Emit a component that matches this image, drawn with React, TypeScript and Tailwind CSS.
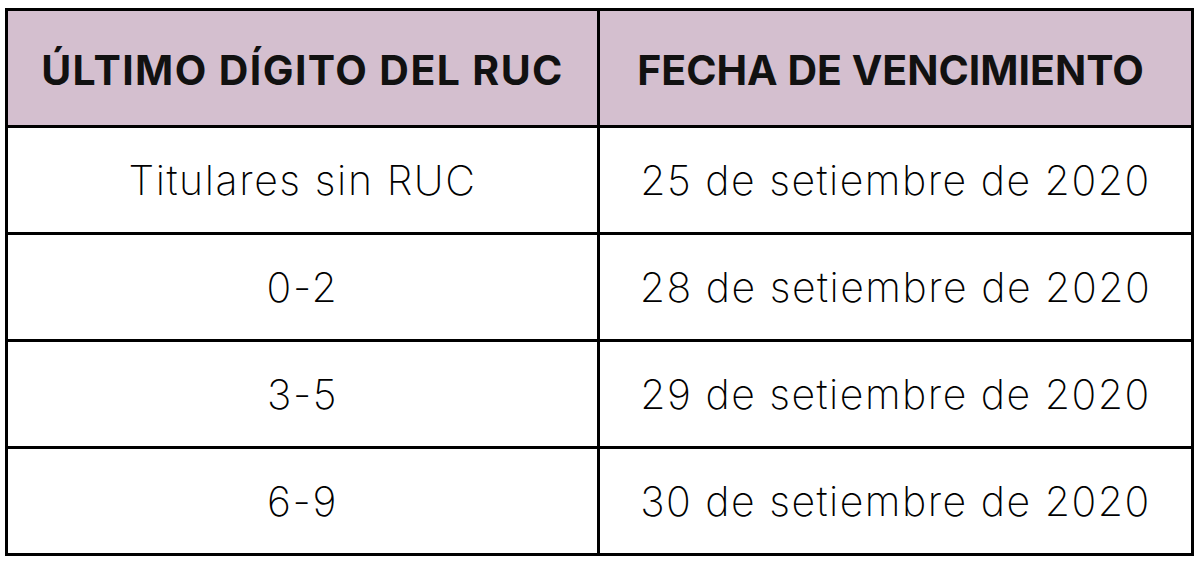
import React from "react";

const rows = [
  ["Titulares sin RUC", "25 de setiembre de 2020"],
  ["0-2", "28 de setiembre de 2020"],
  ["3-5", "29 de setiembre de 2020"],
  ["6-9", "30 de setiembre de 2020"],
];

export default function App() {
  return (
    <div className="w-[1200px] h-[567px] bg-white pl-[5px] pt-[8px]" style={{ fontFamily: "Inter, 'Liberation Sans', sans-serif" }}>
      <table className="border-collapse w-[1189px] text-black">
        <thead>
          <tr className="bg-[#d4bfcf] h-[117px]">
            <th className="border-[3px] border-black w-[592px] text-[41px] font-bold tracking-[1.4px] text-[#111] leading-none pt-[4px]">ÚLTIMO DÍGITO DEL RUC</th>
            <th className="border-[3px] border-black text-[41px] font-bold tracking-[0px] text-[#111] leading-none pt-[4px] pr-[10px]">FECHA DE VENCIMIENTO</th>
          </tr>
        </thead>
        <tbody>
          {rows.map((r, i) => (
            <tr key={i} className="h-[107px]">
              <td className="border-[3px] border-black text-center text-[41px] font-extralight tracking-[1.6px] leading-none">{r[0]}</td>
              <td className="border-[3px] border-black text-center text-[41px] font-extralight tracking-[1.5px] leading-none">{r[1]}</td>
            </tr>
          ))}
        </tbody>
      </table>
    </div>
  );
}
